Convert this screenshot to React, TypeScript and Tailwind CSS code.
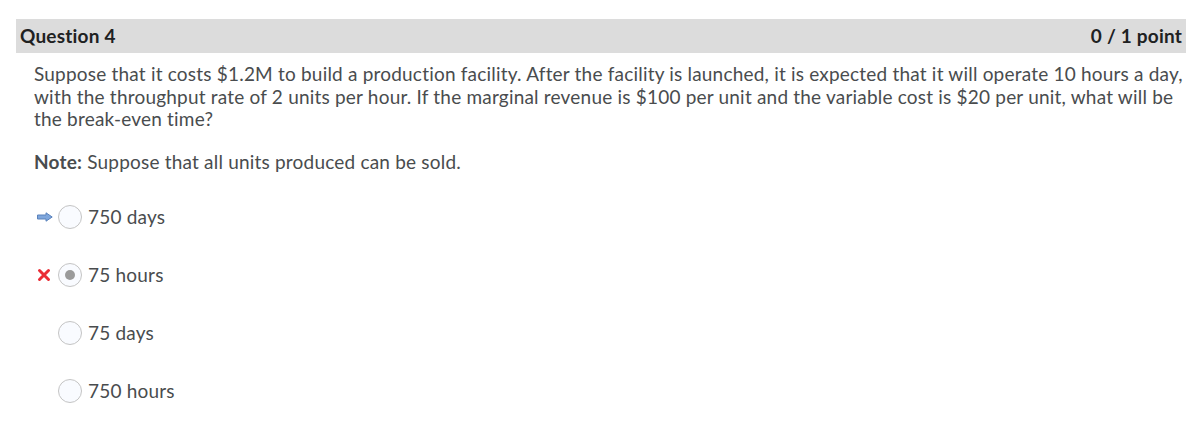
import React from "react";

function Radio({ checked }: { checked?: boolean }) {
  return (
    <span className="flex h-[24px] w-[24px] items-center justify-center rounded-full border border-[#c4c4c4] bg-[#f9fbff]">
      {checked && <span className="h-[10px] w-[10px] rounded-full bg-[#9b9b9b]" />}
    </span>
  );
}

function Arrow() {
  return (
    <svg width="16" height="10" viewBox="0 0 16 10">
      <path d="M0.5 3 H9 V0.8 L15.2 5 L9 9.2 V7 H0.5 Z" fill="#7ea6dc" stroke="#5a82bb" strokeWidth="1" />
    </svg>
  );
}

function Cross() {
  return (
    <svg width="14" height="14" viewBox="0 0 14 14">
      <path d="M2.5 2.5 L11.5 11.5 M11.5 2.5 L2.5 11.5" stroke="#ea2d36" strokeWidth="3" strokeLinecap="round" />
    </svg>
  );
}

function Option({ label, mark, checked }: { label: string; mark?: "arrow" | "cross"; checked?: boolean }) {
  return (
    <div className="flex h-[58px] items-center">
      <span className="flex w-[24px] items-center justify-start pl-[3px]">
        {mark === "arrow" && <Arrow />}
        {mark === "cross" && <Cross />}
      </span>
      <Radio checked={checked} />
      <span className="ml-[6px] text-[19px] tracking-[0.2px] text-[#494c4e]">{label}</span>
    </div>
  );
}

export default function App() {
  return (
    <div className="min-h-[441px] bg-white px-[16px] pt-[19px]" style={{ fontFamily: "Lato, 'Noto Sans', sans-serif" }}>
      <div className="flex h-[34px] items-center justify-between bg-[#dcdcdc] px-[4px] text-[19px] font-bold tracking-[0.2px] text-[#202122]">
        <span>Question 4</span>
        <span>0 / 1 point</span>
      </div>
      <div className="pl-[18px] pt-[10px]">
        <p className="text-[19px] leading-[22.5px] tracking-[0.2px] text-[#494c4e]">
          Suppose that it costs $1.2M to build a production facility. After the facility is launched, it is expected that it will operate 10 hours a day, with the throughput rate of 2 units per hour. If the marginal revenue is $100 per unit and the variable cost is $20 per unit, what will be the break-even time?
        </p>
        <p className="mt-[20px] text-[19px] leading-[22.5px] tracking-[0.2px] text-[#494c4e]">
          <span className="font-bold">Note:</span> Suppose that all units produced can be sold.
        </p>
        <div className="mt-[15px]">
          <Option label="750 days" mark="arrow" />
          <Option label="75 hours" mark="cross" checked />
          <Option label="75 days" />
          <Option label="750 hours" />
        </div>
      </div>
    </div>
  );
}
